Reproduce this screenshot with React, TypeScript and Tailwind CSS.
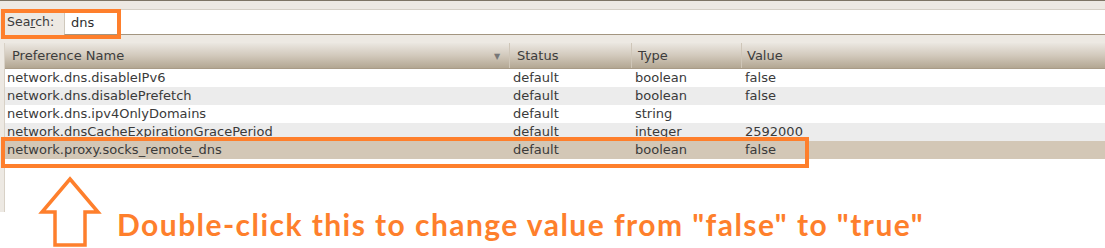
const rows = [
    { name: "network.dns.disableIPv6", status: "default", type: "boolean", value: "false" },
    { name: "network.dns.disablePrefetch", status: "default", type: "boolean", value: "false" },
    { name: "network.dns.ipv4OnlyDomains", status: "default", type: "string", value: "" },
    { name: "network.dnsCacheExpirationGracePeriod", status: "default", type: "integer", value: "2592000" },
    { name: "network.proxy.socks_remote_dns", status: "default", type: "boolean", value: "false" },
];

function UpArrow() {
    return (
        <svg width="64" height="72" viewBox="0 0 64 72" className="absolute left-[38px] top-[176px]">
            <polygon
                points="32,3 60,36 47,36 47,69 17,69 17,36 4,36"
                fill="none"
                stroke="#fe7f2c"
                strokeWidth="3.5"
                strokeLinejoin="miter"
            />
        </svg>
    );
}

export default function App() {
    return (
        <div className="relative w-[1105px] h-[248px] overflow-hidden bg-white font-['DejaVu_Sans',sans-serif] text-[13px] text-[#3a3a3a]">
            {/* search bar */}
            <div className="flex h-[35px] border-t border-[#7d7465] bg-[#ede9e3]">
                <div className="w-[64px] pl-[7px] pt-[12px] text-[12.5px] text-[#3c3c3c]">
                    Sea<span className="underline">r</span>ch:
                </div>
                <div className="flex-1 mt-[8px] border-t border-[#d6d0c6] border-l border-l-[#cfc8bc] border-b border-b-[#a39580] bg-white pl-[6px] pt-[3px] text-[13px] text-[#2e2e2e]">
                    dns
                </div>
            </div>
            <div className="h-[8px] bg-[#ede9e3]" />

            {/* preference list */}
            <div className="flex h-[169px]">
                <div className="w-[5px] bg-[#ede9e3] border-r border-[#d8d1c6]" />
                <div className="flex-1 bg-white">
                    <div className="flex h-[26px] items-center bg-gradient-to-b from-[#ebe7e1] via-[#d2c9bc] to-[#b3a793] border-b border-[#a89b87] text-[#3c3c3c] text-[13px]">
                        <div className="relative w-[505px] h-full flex items-center pl-[7px] border-r border-[#cfc6b8]">
                            Preference Name
                            <span className="absolute left-[489px] top-[8px] text-[8px] text-[#777]">▼</span>
                        </div>
                        <div className="w-[122px] h-full flex items-center pl-[7px] border-r border-[#cfc6b8]">Status</div>
                        <div className="w-[110px] h-full flex items-center pl-[6px] border-r border-[#cfc6b8]">Type</div>
                        <div className="flex-1 h-full flex items-center pl-[5px]">Value</div>
                    </div>
                    {rows.map((r, i) => (
                        <div
                            key={r.name}
                            className={`flex h-[18px] items-center ${
                                i === 4 ? "bg-[#d3c7b6]" : i % 2 === 1 ? "bg-[#ececec]" : "bg-white"
                            }`}
                        >
                            <div className="w-[505px] pl-[2px]">{r.name}</div>
                            <div className="w-[122px] pl-[3px]">{r.status}</div>
                            <div className="w-[110px] pl-[3px]">{r.type}</div>
                            <div className="flex-1 pl-[3px]">{r.value}</div>
                        </div>
                    ))}
                </div>
            </div>

            {/* annotations */}
            <div className="absolute left-[1px] top-[9px] w-[120px] h-[30px] border-[4px] border-[#fe7f2c]" />
            <div className="absolute left-[1px] top-[137px] w-[808px] h-[31px] border-[4px] border-[#fe7f2c]" />
            <UpArrow />
            <div className="absolute left-[117px] top-[204px] font-['Lato',sans-serif] font-bold text-[30px] tracking-[1.45px] leading-[40px] text-[#fe7f2c]">
                Double-click this to change value from "false" to "true"
            </div>
        </div>
    );
}
